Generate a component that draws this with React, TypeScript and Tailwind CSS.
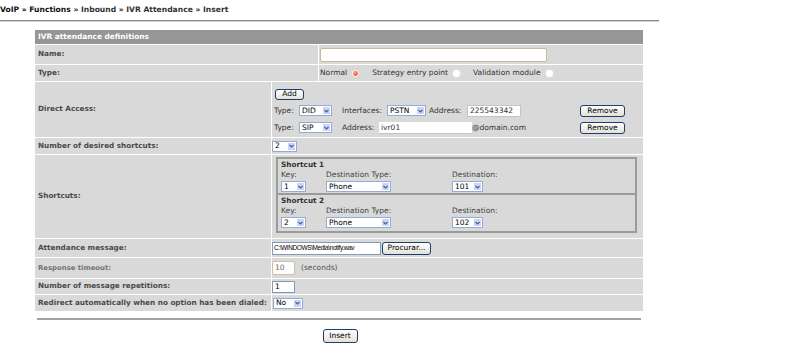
import React from "react";

const Sel = ({ v, w }: { v: string; w: string }) => (
  <span className={`inline-flex items-stretch h-[11px] border border-[#94acd2] bg-white ${w}`}>
    <span className="flex-1 flex items-center pl-[2px] text-[7.5px] leading-none text-black">{v}</span>
    <span className="w-[9px] bg-[#c8d5f8] border border-white rounded-[1px] flex items-center justify-center">
      <svg width="5" height="4" viewBox="0 0 5 4">
        <path d="M0.5 1 L2.5 3 L4.5 1" stroke="#4d6185" fill="none" strokeWidth="1.2" />
      </svg>
    </span>
  </span>
);

const Btn = ({ label, w, h }: { label: string; w: string; h: string }) => (
  <span
    className={`inline-flex items-center justify-center rounded-[3px] border border-[#1c3f70] bg-gradient-to-b from-white to-[#e3e1d7] text-[7.5px] leading-none text-black ${w} ${h}`}
  >
    {label}
  </span>
);

const Radio = ({ on }: { on?: boolean }) => (
  <svg width="9" height="9" viewBox="0 0 9 9" className="shrink-0">
    <defs>
      <radialGradient id="rg" cx="0.4" cy="0.35" r="0.7">
        <stop offset="0" stopColor="#ffb090" />
        <stop offset="1" stopColor="#e23a18" />
      </radialGradient>
    </defs>
    <circle cx="4.5" cy="4.5" r="4" fill={on ? "#f5c8bb" : "#f2efe8"} />
    <circle cx="4.5" cy="4.5" r="3.3" fill="white" />
    {on && <circle cx="4.5" cy="4.5" r="2.4" fill="url(#rg)" />}
  </svg>
);

const Label = ({ children, dim }: { children: React.ReactNode; dim?: boolean }) => (
  <span className={`pl-[3px] font-bold whitespace-nowrap ${dim ? "text-[#727272] text-[6.9px]" : "text-[#4b4b4b] text-[7.25px]"}`}>
    {children}
  </span>
);

const Row = ({ label, h, children, wide, dim }: { label: string; h: string; children?: React.ReactNode; wide?: boolean; dim?: boolean }) => (
  <div className={`flex gap-px ${h}`}>
    <div className={`flex items-center bg-[#d9d9d9] shrink-0 overflow-hidden ${wide ? "w-[283px]" : "w-[236px]"}`}>
      <Label dim={dim}>{label}</Label>
    </div>
    <div className="flex-1 flex items-center bg-[#d9d9d9]">{children}</div>
  </div>
);

const Shortcut = ({ n, d, first }: { n: string; d: string; first?: boolean }) => (
  <div
    className={`h-[38px] w-[361px] border-[#9b9b9b] pl-[3px] ${first ? "border-2" : "border-x-2 border-b-2"}`}
  >
    <div className="font-bold text-[7.3px] text-[#333] leading-[10px] pt-[1px]">Shortcut {n}</div>
    <div className="flex leading-[10px] text-[#444]">
      <span className="w-[45px]">Key:</span>
      <span className="w-[126px]">Destination Type:</span>
      <span>Destination:</span>
    </div>
    <div className="flex mt-[1px]">
      <span className="w-[45px]"><Sel v={n} w="w-[25px]" /></span>
      <span className="w-[126px]"><Sel v="Phone" w="w-[65px]" /></span>
      <Sel v={d} w="w-[31px]" />
    </div>
  </div>
);

export default function App() {
  return (
    <div className="w-[807px] h-[350px] bg-white font-['DejaVu_Sans',sans-serif] text-[7.5px] text-[#333] overflow-hidden">
      <div className="pt-[5px] h-[20px] font-bold text-[7.6px] leading-[10px] text-[#333] whitespace-nowrap">
        <span className="text-[#111]">VoIP » Functions</span> » Inbound » IVR Attendance » Insert
      </div>
      <div className="w-[659px] h-[2px] bg-[#8c8c8c] border-b border-[#d0d0d0]" />

      <div className="ml-[35px] w-[608px] mt-[8px] flex flex-col gap-px">
        <div className="h-[14px] bg-[#969696] flex items-center pl-[3px] font-bold text-[7.4px] text-white">
          IVR attendance definitions
        </div>
        <Row label="Name:" h="h-[19px]" wide>
          <span className="ml-[1px] w-[227px] h-[14px] border border-[#c9b99c] rounded-[2px] bg-white" />
        </Row>
        <Row label="Type:" h="h-[16px]" wide>
          <div className="flex items-center ml-[1px] text-[#333]">
            <span>Normal</span>
            <span className="ml-[4px]"><Radio on /></span>
            <span className="ml-[12px]">Strategy entry point</span>
            <span className="ml-[4px]"><Radio /></span>
            <span className="ml-[12px]">Validation module</span>
            <span className="ml-[4px]"><Radio /></span>
          </div>
        </Row>
        <Row label="Direct Access:" h="h-[55px]">
          <div className="flex flex-col pl-[2px] text-[#333]">
            <span className="pl-[1px] pt-[3px]">
              <Btn label="Add" w="w-[29px]" h="h-[11px]" />
            </span>
            <div className="flex items-center mt-[5px]">
              <span className="w-[25px]">Type:</span>
              <Sel v="DID" w="w-[33px]" />
              <span className="ml-[10px] w-[45px]">Interfaces:</span>
              <Sel v="PSTN" w="w-[39px]" />
              <span className="ml-[3px] w-[38px]">Address:</span>
              <span className="w-[54px] h-[12px] border border-[#c4c4c4] bg-white pl-[2px] flex items-center">225543342</span>
              <span className="ml-[59px]"><Btn label="Remove" w="w-[45px]" h="h-[12px]" /></span>
            </div>
            <div className="flex items-center mt-[5px]">
              <span className="w-[25px]">Type:</span>
              <Sel v="SIP" w="w-[33px]" />
              <span className="ml-[10px] w-[37px]">Address:</span>
              <span className="w-[93px] h-[12px] bg-white pl-[2px] flex items-center border-b border-[#c4c4c4]">ivr01</span>
              <span className="w-[108px]">@domain.com</span>
              <Btn label="Remove" w="w-[45px]" h="h-[12px]" />
            </div>
          </div>
        </Row>
        <Row label="Number of desired shortcuts:" h="h-[16px]">
          <Sel v="2" w="w-[25px]" />
        </Row>
        <Row label="Shortcuts:" h="h-[83px]">
          <div className="self-start pl-[4px] pt-[2px]">
            <Shortcut n="1" d="101" first />
            <Shortcut n="2" d="102" />
          </div>
        </Row>
        <Row label="Attendance message:" h="h-[18px]">
          <span className="w-[109px] h-[13px] border border-[#7f9db9] bg-white flex items-center pl-[1px] text-[6.5px] tracking-[-0.4px] font-['Liberation_Sans',sans-serif] text-black">
            C:\WINDOWS\Media\notify.wav
          </span>
          <span className="ml-[1px]"><Btn label="Procurar..." w="w-[49px]" h="h-[13px]" /></span>
        </Row>
        <Row label="Response timeout:" h="h-[20px]" dim>
          <span className="w-[23px] h-[14px] border border-[#cfc0a3] rounded-[2px] bg-white flex items-center pl-[2px] text-[#666]">10</span>
          <span className="ml-[6px] text-[#555]">(seconds)</span>
        </Row>
        <Row label="Number of message repetitions:" h="h-[15px]">
          <span className="w-[23px] h-[12px] border border-[#7f9db9] bg-white flex items-center pl-[2px] text-black">1</span>
        </Row>
        <Row label="Redirect automatically when no option has been dialed:" h="h-[16px]">
          <span className="ml-[1px]"><Sel v="No" w="w-[30px]" /></span>
        </Row>
      </div>

      <div className="ml-[37px] w-[604px] h-[2px] bg-[#a3a3a3] mt-[7px]" />
      <div className="flex justify-center w-[680px] mt-[9px]">
        <Btn label="Insert" w="w-[35px]" h="h-[14px]" />
      </div>
    </div>
  );
}
